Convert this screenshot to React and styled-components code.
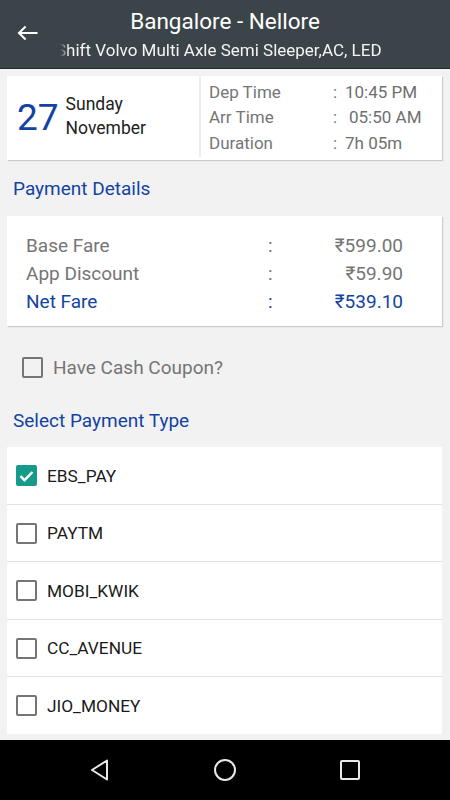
import React from "react";
import styled, { createGlobalStyle } from "styled-components";

const Global = createGlobalStyle`
  html, body { margin: 0; padding: 0; }
  body { font-family: Roboto, "Noto Sans", sans-serif; background: #f2f2f2; }
  * { box-sizing: border-box; }
`;

const Screen = styled.div`
  width: 450px;
  height: 800px;
  display: flex;
  flex-direction: column;
  background: #f2f2f2;
  overflow: hidden;
`;

const Header = styled.header`
  height: 69px;
  flex: none;
  background: #3a4449;
  border-bottom: 1px solid #1f2a30;
  display: flex;
  align-items: center;
`;

const BackButton = styled.div`
  width: 60px;
  height: 100%;
  display: flex;
  align-items: center;
  padding-left: 17px;
  padding-bottom: 2px;
`;

const TitleBlock = styled.div`
  flex: 1;
  min-width: 0;
  margin-right: 60px;
  display: flex;
  flex-direction: column;
  align-items: center;
  color: #fff;
`;

const Title = styled.div`
  font-size: 22.5px;
  line-height: 28px;
  margin-top: 0;
`;

const SubtitleClip = styled.div`
  width: 100%;
  overflow: hidden;
  display: flex;
  justify-content: flex-end;
  white-space: nowrap;
  font-size: 17px;
  line-height: 22px;
  margin-top: 4px;
  color: #f4f4f4;
  -webkit-mask-image: linear-gradient(to right, transparent 0, #000 9px);
  mask-image: linear-gradient(to right, transparent 0, #000 9px);
`;

const Content = styled.main`
  flex: 1;
  min-height: 0;
  overflow: hidden;
  padding: 7px 7px 0 7px;
  display: flex;
  flex-direction: column;
`;

const Card = styled.section`
  background: #fff;
  box-shadow: 1px 1px 1px rgba(0, 0, 0, 0.16);
  margin-right: 1px;
`;

const TripCard = styled(Card)`
  height: 84px;
  display: flex;
`;

const DateSide = styled.div`
  width: 194px;
  display: flex;
  align-items: center;
  padding-left: 10px;
  padding-top: 2px;
  border-right: 2px solid #ececec;
  margin-bottom: 3px;
`;

const DayNum = styled.div`
  font-size: 37px;
  color: #1243a3;
  line-height: 40px;
  margin-right: 7px;
`;

const DayText = styled.div`
  font-size: 17.5px;
  color: #212121;
  line-height: 24px;
  margin-top: -4px;
`;

const TimeGrid = styled.div`
  flex: 1;
  display: grid;
  grid-template-columns: 124px 12px 1fr;
  grid-auto-rows: 25.5px;
  padding: 3px 0 0 8px;
  align-items: center;
  font-size: 17px;
  color: #757575;
`;

const Value = styled.span`
  padding-left: ${(p) => (p.$shift ? "4px" : "0")};
  color: #6f6f6f;
`;

const SectionTitle = styled.h2`
  margin: 0;
  font-weight: 400;
  font-size: 19px;
  color: #1243a3;
  padding-left: 6px;
  line-height: 24px;
  margin-top: ${(p) => p.$top}px;
  margin-bottom: ${(p) => p.$bottom}px;
`;

const FareCard = styled(Card)`
  height: 110px;
  padding: 15px 39px 0 19px;
  display: grid;
  grid-template-columns: 242px 10px 1fr;
  grid-auto-rows: 28px;
  align-items: center;
  font-size: 19px;
`;

const FareCell = styled.span`
  color: ${(p) => (p.$accent ? "#1243a3" : "#757575")};
  text-align: ${(p) => (p.$right ? "right" : "left")};
`;

const CouponRow = styled.label`
  display: flex;
  align-items: center;
  gap: 10px;
  padding-left: 15px;
  margin-top: 30px;
  font-size: 19px;
  color: #757575;
  height: 22px;
`;

const Box = styled.span`
  width: 21px;
  height: 21px;
  flex: none;
  border-radius: 2px;
  border: ${(p) => (p.$checked ? "none" : "2px solid #757575")};
  background: ${(p) => (p.$checked ? "#169b8a" : "transparent")};
  display: flex;
  align-items: center;
  justify-content: center;
`;

const List = styled.ul`
  list-style: none;
  margin: 0;
  padding: 0;
  background: #fff;
  margin-right: 1px;
`;

const Item = styled.li`
  height: 57.5px;
  display: flex;
  align-items: center;
  gap: 10px;
  padding-left: 9px;
  padding-top: 1px;
  font-size: 17.3px;
  color: #1a1a1a;
  & + & {
    border-top: 1px solid #e2e2e2;
  }
  &:first-child {
    height: 56.5px;
  }
`;

const NavBar = styled.nav`
  height: 60px;
  flex: none;
  background: #000;
  display: flex;
  justify-content: center;
  align-items: center;
  gap: 75px;
`;

const NavButton = styled.div`
  width: 50px;
  display: flex;
  justify-content: center;
`;

function Check({ checked }) {
  return (
    <Box $checked={checked}>
      {checked && (
        <svg width="15" height="12" viewBox="0 0 15 12">
          <path d="M1.5 6.2l4 4L13.5 2" fill="none" stroke="#fff" strokeWidth="2.4" />
        </svg>
      )}
    </Box>
  );
}

const payments = ["EBS_PAY", "PAYTM", "MOBI_KWIK", "CC_AVENUE", "JIO_MONEY"];

export default function App() {
  return (
    <>
      <Global />
      <Screen>
        <Header>
          <BackButton>
            <svg width="21" height="16" viewBox="0 0 21 16">
              <path d="M20.5 8H2.2M8.6 1.4L2 8l6.6 6.6" fill="none" stroke="#fff" strokeWidth="2.1" />
            </svg>
          </BackButton>
          <TitleBlock>
            <Title>Bangalore - Nellore</Title>
            <SubtitleClip>
              <span>Shift Volvo Multi Axle Semi Sleeper,AC, LED&nbsp;&nbsp;</span>
            </SubtitleClip>
          </TitleBlock>
        </Header>
        <Content>
          <TripCard>
            <DateSide>
              <DayNum>27</DayNum>
              <DayText>
                Sunday
                <br />
                November
              </DayText>
            </DateSide>
            <TimeGrid>
              <span>Dep Time</span>
              <span>:</span>
              <Value>10:45 PM</Value>
              <span>Arr Time</span>
              <span>:</span>
              <Value $shift>05:50 AM</Value>
              <span>Duration</span>
              <span>:</span>
              <Value>7h 05m</Value>
            </TimeGrid>
          </TripCard>
          <SectionTitle $top={17} $bottom={15}>Payment Details</SectionTitle>
          <FareCard>
            <FareCell>Base Fare</FareCell>
            <FareCell>:</FareCell>
            <FareCell $right>₹599.00</FareCell>
            <FareCell>App Discount</FareCell>
            <FareCell>:</FareCell>
            <FareCell $right>₹59.90</FareCell>
            <FareCell $accent>Net Fare</FareCell>
            <FareCell $accent>:</FareCell>
            <FareCell $accent $right>₹539.10</FareCell>
          </FareCard>
          <CouponRow>
            <Check />
            Have Cash Coupon?
          </CouponRow>
          <SectionTitle $top={31} $bottom={14}>Select Payment Type</SectionTitle>
          <List>
            {payments.map((p, i) => (
              <Item key={p}>
                <Check checked={i === 0} />
                {p}
              </Item>
            ))}
          </List>
        </Content>
        <NavBar>
          <NavButton>
            <svg width="24" height="26" viewBox="0 0 24 26">
              <path d="M19 3.5L4 13l15 9.5z" fill="none" stroke="#e8e8e8" strokeWidth="2" strokeLinejoin="round" />
            </svg>
          </NavButton>
          <NavButton>
            <svg width="24" height="24" viewBox="0 0 24 24">
              <circle cx="12" cy="12" r="10" fill="none" stroke="#e8e8e8" strokeWidth="2" />
            </svg>
          </NavButton>
          <NavButton>
            <svg width="22" height="22" viewBox="0 0 22 22">
              <rect x="2" y="2" width="18" height="18" rx="1" fill="none" stroke="#e8e8e8" strokeWidth="2" />
            </svg>
          </NavButton>
        </NavBar>
      </Screen>
    </>
  );
}
